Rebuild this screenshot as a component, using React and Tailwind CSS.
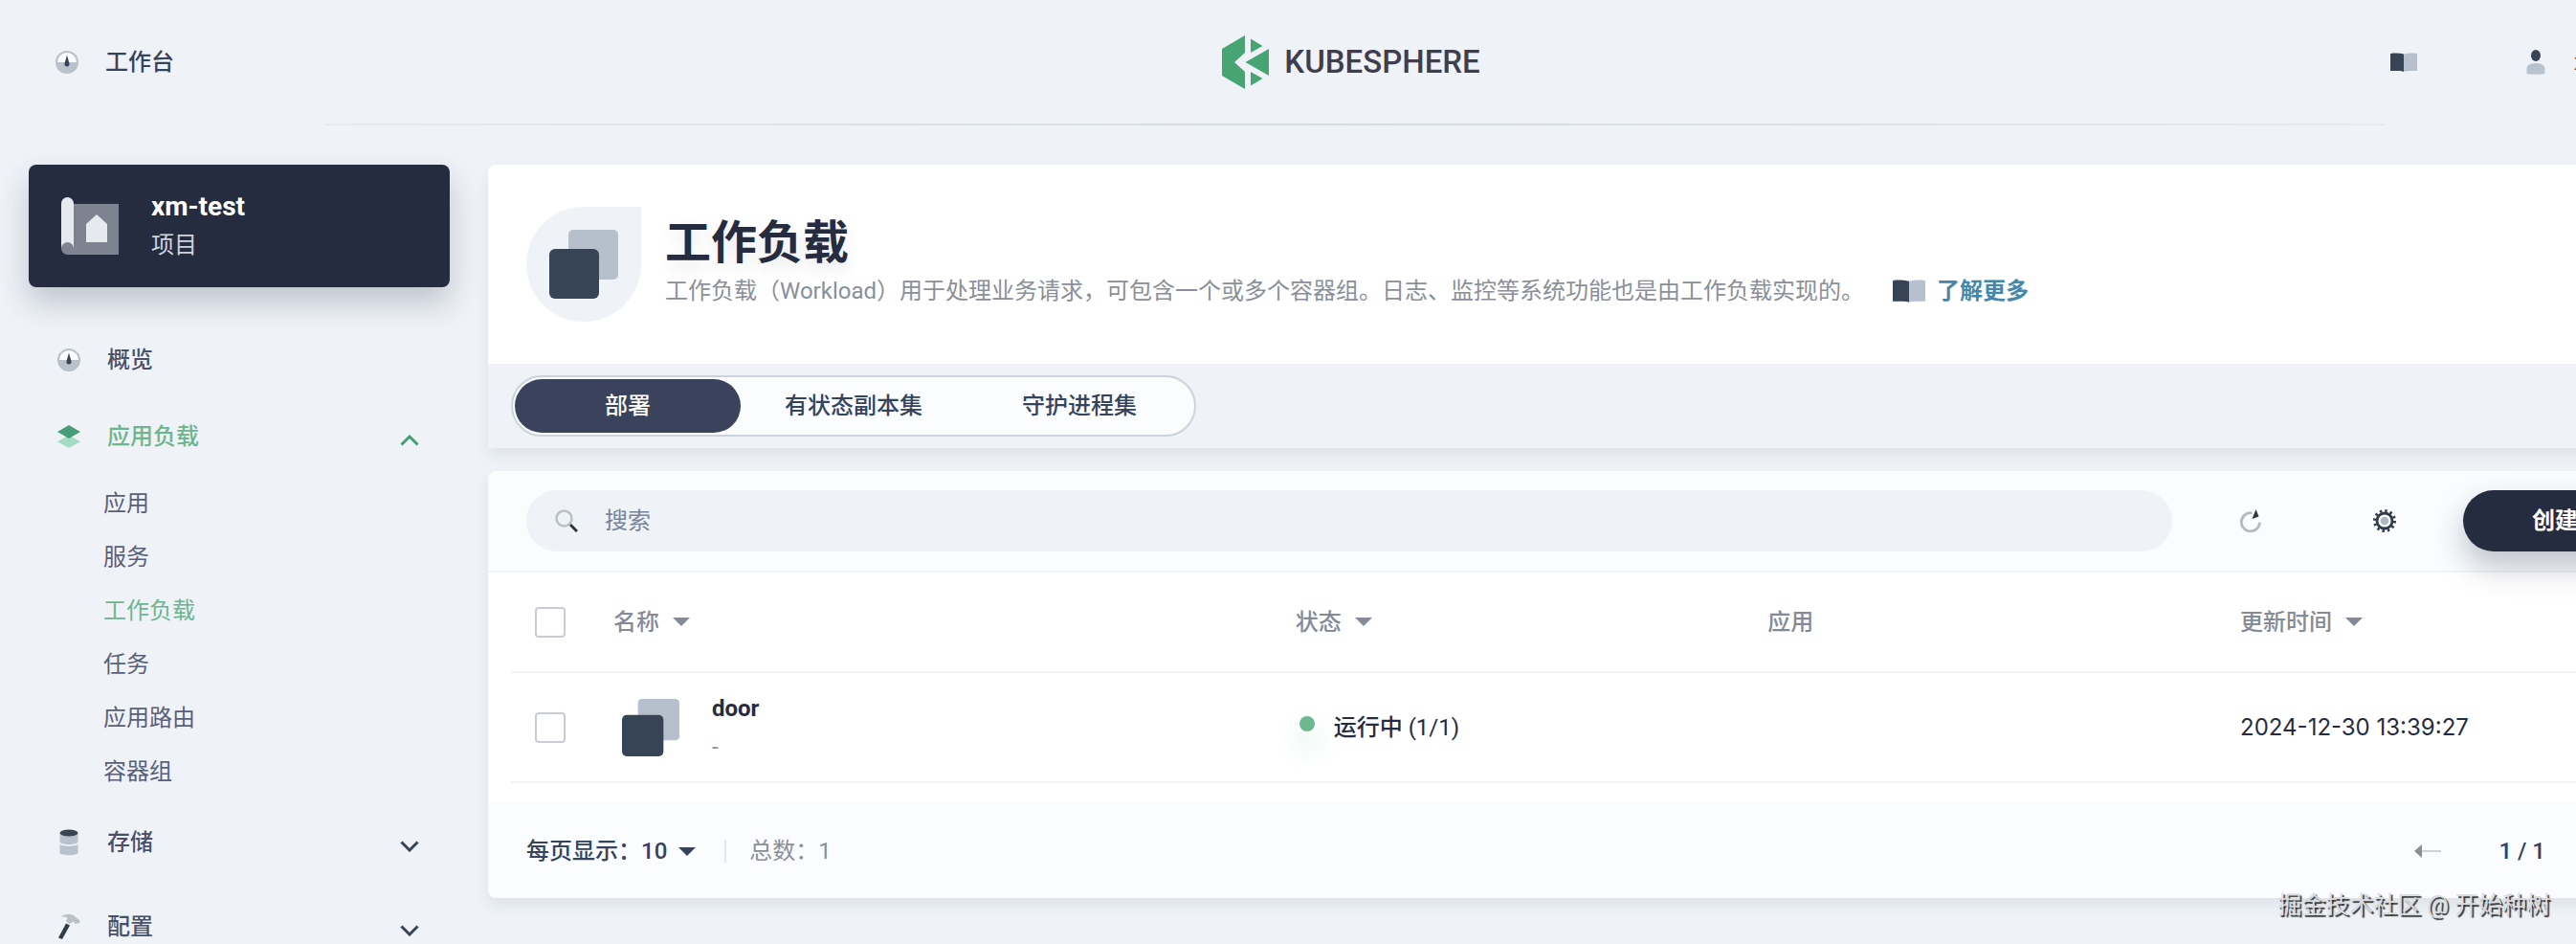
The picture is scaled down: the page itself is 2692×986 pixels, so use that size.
import { useState } from 'react'
import clsx from 'clsx'

const navItems = [
  { name: '概览', icon: 'gauge' },
  {
    name: '应用负载',
    icon: 'layers',
    open: true,
    children: ['应用', '服务', '工作负载', '任务', '应用路由', '容器组'],
  },
  { name: '存储', icon: 'database', children: [] },
  { name: '配置', icon: 'hammer', children: [] },
]

const tabs = ['部署', '有状态副本集', '守护进程集']

const workloads = [
  { name: 'door', description: '-', status: '运行中', replicas: '(1/1)', app: '', updated: '2024-12-30 13:39:27' },
]

const GaugeIcon = () => (
  <svg className="size-6" viewBox="0 0 24 24" aria-hidden="true">
    <circle cx="12" cy="12" r="12" fill="#b9c1cb" />
    <path d="M2 12a10 10 0 0 1 20 0z" fill="#fafcff" />
    <path d="M12 4.5l2.3 8.3a2.6 2.6 0 1 1-4.6 0z" fill="#374456" />
  </svg>
)

const LayersIcon = () => (
  <svg className="size-6" viewBox="0 0 24 24" aria-hidden="true">
    <path d="M12 10.5L24 17.2 12 24 0 17.2z" fill="#a4dcc4" />
    <path d="M12 0l12 7-12 7L0 7z" fill="#479e76" />
  </svg>
)

const DatabaseIcon = () => (
  <svg className="h-7 w-6" viewBox="0 0 24 28" aria-hidden="true">
    <path d="M2.5 4v9c0 4 19 4 19 0V4z" fill="#b9c1cf" />
    <path d="M2.5 16v8.500c0 3.700 19 3.700 19 0V16c-3 2.300-16 2.300-19 0z" fill="#b9c1cf" />
    <ellipse cx="12" cy="4" rx="9.500" ry="3.500" fill="#374456" />
  </svg>
)

const HammerIcon = () => (
  <svg className="h-7 w-6" viewBox="0 0 24 28" aria-hidden="true">
    <path d="M3.500 3.500C7 .5 14 0 18 3l5.500 4.500-.5 2.500-4 1-2.500-2.500-3.500 2.500-4-2.500 1.500-4c-1.500-1-4.500-1.300-7-1z" fill="#b9c1c8" />
    <path d="M9 10.500l4 2L5 27l-4-1.500z" fill="#303b4b" />
  </svg>
)

const navIcons = { gauge: GaugeIcon, layers: LayersIcon, database: DatabaseIcon, hammer: HammerIcon }

const BookIcon = ({ className }) => (
  <svg className={className} viewBox="0 0 28 20" preserveAspectRatio="none" aria-hidden="true">
    <path d="M0 1.200C0 .3 9 0 14 1.500V20c-1.500-1-4-1-14-1z" fill="#374456" />
    <path d="M28 1.200C28 .3 19 0 14 1.500V20c1.500-1 4-1 14-1z" fill="#b6c0cf" />
  </svg>
)

const UserIcon = () => (
  <svg className="h-[26px] w-5" viewBox="0 0 20 26" aria-hidden="true">
    <ellipse cx="10" cy="6" rx="5" ry="6" fill="#374456" />
    <path d="M.5 25v-5c0-4 4-6 9.500-6s9.500 2 9.500 6v5c-3 1-16 1-19 0z" fill="#b9c3cf" />
  </svg>
)

const ProjectIcon = () => (
  <svg className="size-[60px]" viewBox="0 0 60 60" aria-hidden="true">
    <path d="M6 7h54v53H6z" fill="#7e8391" />
    <path d="M0 6.500a6.500 6.500 0 0 1 13 0V53H0z" fill="#e6e9ed" />
    <circle cx="6.500" cy="53.500" r="6.500" fill="#7e8391" />
    <path d="M26 28l11-10 11 10v19H26z" fill="#e6e9ed" />
  </svg>
)

const WorkloadIcon = ({ className }) => (
  <svg className={className} viewBox="0 0 72 72" aria-hidden="true">
    <rect x="20" width="52" height="52" rx="5" fill="#b6c0cc" />
    <rect y="20" width="52" height="52" rx="6" fill="#374456" />
  </svg>
)

const SearchIcon = () => (
  <svg className="size-6" viewBox="0 0 24 24" fill="none" aria-hidden="true">
    <circle cx="9.500" cy="9.500" r="8" stroke="#b9c1c8" strokeWidth="2.500" />
    <path d="M16 16l7 7" stroke="#303640" strokeWidth="3" />
  </svg>
)

const RefreshIcon = () => (
  <svg className="size-6" viewBox="0 0 24 24" fill="none" aria-hidden="true">
    <path d="M13.500 3.800A9.600 9.600 0 1 0 21.500 13.500" stroke="#b4bbc0" strokeWidth="2.800" />
    <path d="M17.500 0l3 7.500-7 2.500z" fill="#303640" />
  </svg>
)

const GearIcon = () => (
  <svg className="size-6" viewBox="0 0 24 24" fill="none" aria-hidden="true">
    <circle cx="12" cy="12" r="10.500" stroke="#303b4b" strokeWidth="3" strokeDasharray="2.400 3.098" />
    <circle cx="12" cy="12" r="8" stroke="#303b4b" strokeWidth="2.800" />
    <circle cx="12" cy="12" r="4.300" fill="#adb9c2" />
  </svg>
)

const Caret = () => (
  <svg className="h-[9px] w-[18px]" viewBox="0 0 18 9" aria-hidden="true">
    <path d="M0 0h18L9 9z" fill="currentColor" />
  </svg>
)

const Chevron = ({ up }) => (
  <svg className={clsx('mt-2 h-3 w-5', up && 'rotate-180')} viewBox="0 0 20 12" fill="none" aria-hidden="true">
    <path d="M1.500 1.500L10 10l8.500-8.500" stroke="currentColor" strokeWidth="3" />
  </svg>
)

const Logo = () => (
  <a href="#" className="mr-6 flex items-center gap-4">
    <svg className="h-14 w-[49px]" viewBox="0 0 49 56" fill="#47a574" aria-hidden="true">
      <path d="M24 0v18L13 28l11 10v18L0 42V14z" />
      <path d="M30 3.500L42.500 11 30 18z" />
      <path d="M49 14v28L24.500 28z" />
      <path d="M30 52.500L42.500 45 30 38z" />
    </svg>
    <span className="text-[33px] leading-10 font-medium text-[#403e4d]">KUBESPHERE</span>
  </a>
)

const Header = () => (
  <header>
    <div className="flex h-[129px] items-center">
      <div className="flex-1 pl-[58px]">
        <button className="flex items-center gap-7 text-2xl font-medium text-[#36435c]">
          <GaugeIcon />
          工作台
        </button>
      </div>
      <Logo />
      <div className="flex flex-1 items-center justify-end gap-[114px] pr-[42px]">
        <button aria-label="文档">
          <BookIcon className="h-5 w-7" />
        </button>
        <button className="flex w-[150px] items-center gap-[30px] text-2xl font-medium text-[#36435c]">
          <UserIcon />
          xm
        </button>
      </div>
    </div>
    <div className="mx-[12%] h-[2px] bg-linear-to-r from-[#e7ebf0] via-[#d5dbe4] to-[#e7ebf0]" />
  </header>
)

const Sidebar = () => (
  <aside className="w-[510px] shrink-0 pr-10 pl-[30px]">
    <div className="flex h-32 items-center rounded-lg bg-[#262c3f] px-[34px] shadow-[0_16px_32px_rgba(36,46,66,0.24)]">
      <ProjectIcon />
      <div className="ml-[34px]">
        <h2 className="text-[28px] leading-10 font-bold text-white">xm-test</h2>
        <p className="text-2xl leading-10 text-[#cdd3e0]">项目</p>
      </div>
    </div>
    <nav className="pt-9">
      <ul>
        {navItems.map((item) => {
          const Icon = navIcons[item.icon]
          const closed = item.children && !item.open
          return (
            <li key={item.name}>
              <button
                className={clsx(
                  'flex w-full items-center pr-8 pl-[30px] text-2xl font-medium',
                  closed ? 'h-[88px]' : 'h-20',
                  item.open ? 'text-[#6db58f]' : 'text-[#4a5069]'
                )}
              >
                <Icon />
                <span className="ml-7">{item.name}</span>
                {item.children && (
                  <span className={clsx('ml-auto', item.open ? 'text-[#479e76]' : 'text-[#374456]')}>
                    <Chevron up={item.open} />
                  </span>
                )}
              </button>
              {item.open && (
                <ul className="py-[2px] pl-[78px]">
                  {item.children.map((child) => (
                    <li key={child}>
                      <a
                        href="#"
                        className={clsx(
                          'flex h-14 items-center text-2xl',
                          child === '工作负载' ? 'text-[#6db58f]' : 'text-[#5a607a]'
                        )}
                      >
                        {child}
                      </a>
                    </li>
                  ))}
                </ul>
              )}
            </li>
          )
        })}
      </ul>
    </nav>
  </aside>
)

const Banner = () => {
  const [active, setActive] = useState(tabs[0])

  return (
    <section className="overflow-hidden rounded-t-lg bg-[#eff3f8] shadow-[0_8px_16px_rgba(36,46,66,0.08)]">
      <div className="flex h-52 items-center bg-white px-10">
        <div className="flex size-[120px] shrink-0 items-center justify-center rounded-full rounded-tr-none bg-[#eff3f8]">
          <WorkloadIcon className="size-[72px]" />
        </div>
        <div className="ml-[25px] pb-1">
          <h1 className="text-5xl leading-[60px] font-bold text-[#262c3f] [text-shadow:0_8px_16px_rgba(36,46,66,0.1)]">工作负载</h1>
          <div className="flex items-center text-2xl leading-10">
            <p className="text-[#8a8f99]">
              工作负载（Workload）用于处理业务请求，可包含一个或多个容器组。日志、监控等系统功能也是由工作负载实现的。
            </p>
            <a href="#" className="ml-[30px] flex shrink-0 items-center gap-3 font-bold text-[#4587ab]">
              <BookIcon className="h-6 w-[34px]" />
              了解更多
            </a>
          </div>
        </div>
      </div>
      <div className="px-6 py-3">
        <div className="flex w-[716px] rounded-full border-2 border-[#ccd3db] bg-[#fafcfe] p-[2px]">
          {tabs.map((tab) => (
            <button
              key={tab}
              onClick={() => setActive(tab)}
              className={clsx(
                'h-14 flex-1 rounded-full text-2xl font-medium',
                tab === active ? 'bg-[#3a435b] text-white' : 'text-[#36435c]'
              )}
            >
              {tab}
            </button>
          ))}
        </div>
      </div>
    </section>
  )
}

const Toolbar = () => (
  <div className="flex items-center border-b-2 border-[#f1f4f8] bg-[#fafcfe] py-5 pr-[26px] pl-10">
    <label className="flex h-16 flex-1 items-center gap-7 rounded-full bg-[#eff3f8] px-[30px]">
      <SearchIcon />
      <input
        type="text"
        aria-label="搜索"
        placeholder="搜索"
        className="flex-1 bg-transparent text-2xl text-[#36435c] outline-none placeholder:text-[#79839a]"
      />
    </label>
    <button aria-label="刷新" className="ml-[70px]">
      <RefreshIcon />
    </button>
    <button aria-label="设置" className="ml-[116px]">
      <GearIcon />
    </button>
    <button className="ml-[70px] h-16 w-48 rounded-full bg-[#262c3f] text-2xl font-bold text-white shadow-[0_16px_32px_rgba(36,46,66,0.28)]">
      创建
    </button>
  </div>
)

const Checkbox = ({ label }) => (
  <input
    type="checkbox"
    aria-label={label}
    className="block size-8 appearance-none rounded-sm border-2 border-[#c9cdd3] bg-white checked:bg-[#36435c]"
  />
)

const SortButton = ({ children }) => (
  <button className="flex items-center gap-[14px] font-medium">
    {children}
    <Caret />
  </button>
)

const WorkloadTable = () => (
  <div className="bg-white px-6 pb-5">
    <table className="w-full table-fixed text-left text-2xl">
      <thead>
        <tr className="h-[104px] border-b-2 border-[#f1f3f6] text-[#858a98]">
          <th className="w-[107px] pl-[25px]"><Checkbox label="全选" /></th>
          <th className="w-[31.9%]"><SortButton>名称</SortButton></th>
          <th className="w-[22.1%]"><SortButton>状态</SortButton></th>
          <th className="w-[22.1%] font-medium">应用</th>
          <th><SortButton>更新时间</SortButton></th>
        </tr>
      </thead>
      <tbody>
        {workloads.map((row) => (
          <tr key={row.name} className="h-[115px] border-b-2 border-[#f1f3f6] text-[#262c3f]">
            <td className="pl-[25px]"><Checkbox label={row.name} /></td>
            <td>
              <div className="flex items-center pl-[9px]">
                <WorkloadIcon className="size-[60px]" />
                <div className="ml-[34px] leading-10">
                  <a href="#" className="block font-bold">{row.name}</a>
                  <p className="text-[#8a8f99]">{row.description}</p>
                </div>
              </div>
            </td>
            <td>
              <div className="flex items-center pl-1">
                <span className="mr-5 mb-2 size-4 rounded-full bg-[#6eb88f] shadow-[0_16px_24px_4px_rgba(85,188,138,0.16)]" />
                <span className="font-medium">{row.status}</span>
                <span className="ml-[6px]">{row.replicas}</span>
              </div>
            </td>
            <td>{row.app}</td>
            <td className="font-['Inter',sans-serif]">{row.updated}</td>
          </tr>
        ))}
      </tbody>
    </table>
  </div>
)

const Pagination = () => (
  <footer className="flex h-[100px] items-center bg-[#fafcfe] pt-[2px] pr-[132px] pl-10 text-2xl">
    <button className="flex items-center gap-3 font-medium text-[#36435c]">
      每页显示：10
      <Caret />
    </button>
    <span className="mr-6 ml-[30px] h-6 w-[2px] bg-[#e3e9ef]" />
    <span className="text-[#8a8f99]">总数：1</span>
    <button aria-label="上一页" className="ml-auto">
      <svg className="h-4 w-7" viewBox="0 0 28 16" aria-hidden="true">
        <path d="M8 7h20v2H8z" fill="#cdd2d6" />
        <path d="M0 8l8-7v14z" fill="#8b8f94" />
      </svg>
    </button>
    <span className="ml-[60px] font-medium text-[#36435c]">1 / 1</span>
  </footer>
)

const App = () => {
  return (
    <div className="relative h-screen overflow-hidden bg-[#eff3f8] font-['Roboto','Noto_Sans_CJK_SC',sans-serif]">
      <div className="w-[calc(100%+140px)]">
        <Header />
        <div className="flex pt-[41px]">
          <Sidebar />
          <main className="mr-10 min-w-0 flex-1">
            <Banner />
            <section className="mt-6 overflow-hidden rounded-lg shadow-[0_8px_16px_rgba(36,46,66,0.08)]">
              <Toolbar />
              <WorkloadTable />
              <Pagination />
            </section>
          </main>
        </div>
      </div>
      <p className="absolute right-[27px] bottom-5 text-[25px] leading-10 text-[#d8dbe0] [text-shadow:2px_2px_1px_#333]">
        掘金技术社区 @ 开始种树
      </p>
    </div>
  )
}

export default App
